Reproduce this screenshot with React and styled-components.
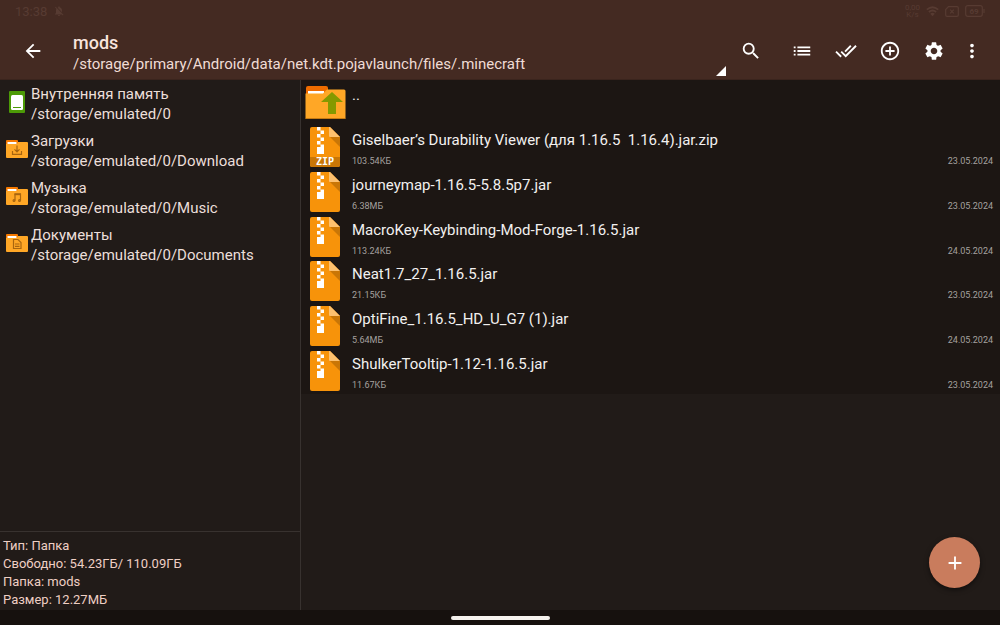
import React from "react";
import styled, { createGlobalStyle } from "styled-components";
import {
  MdArrowBack, MdSearch, MdList, MdDoneAll, MdAddCircleOutline, MdSettings, MdMoreVert, MdAdd,
  MdNotificationsOff,
} from "react-icons/md";

const GlobalStyle = createGlobalStyle`
  * { box-sizing: border-box; }
  body { margin: 0; background: #211b18; }
  button { font: inherit; color: inherit; background: none; border: 0; padding: 0; cursor: pointer; }
  ul, h1, p, dl, dd { margin: 0; padding: 0; list-style: none; }
  a { color: inherit; text-decoration: none; }
`;

const Screen = styled.div`
  min-height: 100vh;
  display: flex;
  flex-direction: column;
  font-family: Roboto, "Noto Sans", sans-serif;
  color: #f2f0ef;
`;

const Header = styled.header`
  background: #442a22;
  border-bottom: 1px solid #3a241d;
`;

const StatusBar = styled.div`
  display: flex;
  justify-content: space-between;
  align-items: center;
  height: 22px;
  padding: 0 15px;
  font-size: 13px;
  color: #573b32;
`;

const StatusGroup = styled.div`
  display: flex;
  align-items: center;
  gap: 6px;
`;

const NetSpeed = styled.span`
  font-size: 8px;
  line-height: 7px;
  text-align: center;
`;

const Toolbar = styled.div`
  display: flex;
  height: 57px;
  padding-right: 12px;
`;

const IconButton = styled.button`
  width: ${(p) => p.$width || 44}px;
  margin-right: ${(p) => p.$after || 0}px;
  display: flex;
  align-items: center;
  justify-content: center;
  color: #ffffff;
`;

const PathButton = styled.button`
  flex: 1;
  min-width: 0;
  display: flex;
  justify-content: space-between;
  align-items: flex-end;
  padding: 9px 3px 3px 7px;
  text-align: left;
`;

const PathText = styled.span`
  display: flex;
  flex-direction: column;
  align-self: flex-start;
`;

const FolderName = styled.span`
  font-size: 18px;
  line-height: 23px;
  font-weight: 500;
  color: #f8e4dd;
`;

const FolderPath = styled.span`
  font-size: 15px;
  line-height: 20px;
  color: #f0dcd5;
`;

const Body = styled.div`
  flex: 1;
  display: flex;
`;

const Sidebar = styled.aside`
  width: 30%;
  display: flex;
  flex-direction: column;
  justify-content: space-between;
  border-right: 1px solid #38322f;
  box-sizing: content-box;
`;

const Place = styled.a`
  display: flex;
  align-items: center;
  height: 47px;
  padding: 0 5px;
  gap: 2px;
  color: #ecdfda;
  font-size: 15px;
  line-height: 20px;
`;

const PlaceBadge = styled.span`
  display: flex;
  padding-bottom: 4px;
`;

const PlaceText = styled.span`
  display: flex;
  flex-direction: column;
`;

const Summary = styled.div`
  border-top: 1px solid #38322f;
  padding: 5px 3px 1px;
  font-size: 13px;
  line-height: 18px;
  color: #efcfc4;
`;

const Pane = styled.main`
  flex: 1;
  min-width: 0;
  position: relative;
`;

const FileList = styled.ul`
  display: grid;
  grid-auto-rows: 1fr;
  min-height: 314px;
  background: #1c1613;
`;

const FileRow = styled.li`
  display: flex;
`;

const FileLink = styled.a`
  flex: 1;
  min-width: 0;
  display: flex;
  gap: 6px;
  padding: 1px 7px 0 3px;
`;

const FileInfo = styled.span`
  flex: 1;
  min-width: 0;
  display: flex;
  flex-direction: column;
  padding-top: 4px;
`;

const FileName = styled.span`
  font-size: 15px;
  line-height: 20px;
  white-space: pre;
`;

const FileMeta = styled.span`
  display: flex;
  justify-content: space-between;
  margin-top: 5px;
  font-size: 9px;
  line-height: 12px;
  color: #a5a19f;
`;

const Fab = styled.button`
  position: absolute;
  right: 20px;
  bottom: 22px;
  width: 51px;
  height: 51px;
  border-radius: 50%;
  background: #c97c5d;
  color: #fff;
  display: flex;
  align-items: center;
  justify-content: center;
  box-shadow: 0 2px 5px rgba(0, 0, 0, 0.5);
`;

const NavBar = styled.footer`
  height: 15px;
  display: flex;
  justify-content: center;
  align-items: center;
  background: #16110e;
`;

const HomeHandle = styled.div`
  width: 99px;
  height: 4px;
  border-radius: 2px;
  background: #f1efea;
`;

const WifiIcon = () => (
  <svg width="13" height="11" viewBox="0 0 13 11" fill="none" stroke="currentColor" strokeWidth="1.800">
    <path d="M.8 3.600q5.700-4.600 11.400 0M2.900 6q3.600-3 7.200 0" />
    <path d="M4.300 7.700q2.200-1.700 4.400 0L6.500 10.300z" fill="currentColor" stroke="none" />
  </svg>
);

const NoSimIcon = () => (
  <svg width="14" height="11" viewBox="0 0 14 11" fill="none" stroke="currentColor" strokeWidth="1.200">
    <path d="M3.500.7H12a1.300 1.300 0 0 1 1.300 1.300v7A1.300 1.300 0 0 1 12 10.300H2A1.300 1.300 0 0 1 .7 9V3.500z" />
    <path d="M5.200 3.700l3.600 3.600M8.800 3.700L5.200 7.300" />
  </svg>
);

const BatteryIcon = () => (
  <svg width="20" height="12" viewBox="0 0 20 12" fill="none" stroke="currentColor" strokeWidth="1.200">
    <rect x=".7" y=".7" width="16.600" height="10.600" rx="2" />
    <path d="M19 4v4" />
    <text x="9" y="9" fontSize="8" fontWeight="700" textAnchor="middle" fill="currentColor" stroke="none">69</text>
  </svg>
);

const CornerIcon = () => (
  <svg width="10" height="10" viewBox="0 0 10 10"><path d="M10 0v10H0z" fill="#fff" /></svg>
);

const glyphs = {
  download: <path d="M12 8.500v6M9.500 12.300l2.500 2.500 2.500-2.500M7.500 14v3.300h9V14" />,
  music: (
    <>
      <path d="M10 16.500V10h5.500v6.500" />
      <path d="M9.500 10.300h6.500" strokeWidth="1.800" />
      <circle cx="9" cy="16.500" r=".9" /><circle cx="14.500" cy="16.500" r=".9" />
    </>
  ),
  document: <path d="M8.500 8.500h4.500l3 3V17.500h-7.500zM10 13h4.500M10 15.300h4.500" />,
};

const PlaceIcon = ({ kind }) =>
  kind === "memory" ? (
    <svg width="24" height="24" viewBox="0 0 24 24">
      <rect x="4" y="1" width="16" height="22" rx="1" fill="#4c9a06" />
      <rect x="6" y="5" width="12" height="15" rx="1.500" fill="#fff" />
      <path d="M8 17.500h8" stroke="#4c9a06" />
    </svg>
  ) : (
    <svg width="24" height="24" viewBox="0 0 24 24">
      <path d="M1 4q0-1 1-1h10q1 0 1 1v5H1z" fill="#f57900" />
      <path d="M2.500 5h9v2h-9z" fill="#fff" />
      <path d="M1 7h11l1-2h9q1 0 1 1v14q0 1-1 1H2q-1 0-1-1z" fill="#ffa726" />
      <g fill="none" stroke="#a8650f" strokeWidth="1.200">{glyphs[kind]}</g>
    </svg>
  );

const ParentIcon = () => (
  <svg width="42" height="42" viewBox="0 0 42 42">
    <path d="M2 7q0-2 2-2h18q2 0 2 2v6H2z" fill="#ef6c00" />
    <path d="M4 10h16v3H4z" fill="#fff" />
    <path d="M1.500 12.500h17.500l4-4h17q1.500 0 1.500 1.500v27.500H1.500z" fill="#ffa726" />
    <path d="M1.500 37h40v1h-40z" fill="#c77b12" />
    <path d="M28 11l11 10h-7v12h-8V21h-7z" fill="#859900" />
  </svg>
);

const ArchiveIcon = ({ zip }) => (
  <svg width="42" height="42" viewBox="0 0 42 42">
    <path d="M8 1h18l10 10v28q0 2-2 2H8q-2 0-2-2V3q0-2 2-2z" fill="#f7930a" />
    <path d="M26 11h10v10z" fill="#c97606" />
    <path d="M26 1l10 10H26q-1 0-1-1V1z" fill="#fdc06e" />
    <path
      d="M13 1h3.500v3.500H13zM16.500 4.500H20V8h-3.500zM13 8h3.500v3.500H13zM16.500 11.500H20V15h-3.500zM13 15h3.500v3.500H13zM16.500 18.500H20V21h-3.500zM13 21h7v7h-7z"
      fill="#fff"
    />
    {zip && (
      <>
        <path d="M6 31h30v8q0 2-2 2H8q-2 0-2-2z" fill="#c97606" />
        <text x="21" y="39" fontSize="10" fontWeight="700" fontFamily="DejaVu Sans Mono, monospace" textAnchor="middle" fill="#fff">ZIP</text>
      </>
    )}
  </svg>
);

const places = [
  { kind: "memory", name: "Внутренняя память", path: "/storage/emulated/0" },
  { kind: "download", name: "Загрузки", path: "/storage/emulated/0/Download" },
  { kind: "music", name: "Музыка", path: "/storage/emulated/0/Music" },
  { kind: "document", name: "Документы", path: "/storage/emulated/0/Documents" },
];

const files = [
  { name: "Giselbaer’s Durability Viewer (для 1.16.5  1.16.4).jar.zip", size: "103.54КБ", date: "23.05.2024", zip: true },
  { name: "journeymap-1.16.5-5.8.5p7.jar", size: "6.38МБ", date: "23.05.2024" },
  { name: "MacroKey-Keybinding-Mod-Forge-1.16.5.jar", size: "113.24КБ", date: "24.05.2024" },
  { name: "Neat1.7_27_1.16.5.jar", size: "21.15КБ", date: "23.05.2024" },
  { name: "OptiFine_1.16.5_HD_U_G7 (1).jar", size: "5.64МБ", date: "24.05.2024" },
  { name: "ShulkerTooltip-1.12-1.16.5.jar", size: "11.67КБ", date: "23.05.2024" },
];

const summary = ["Тип: Папка", "Свободно: 54.23ГБ/ 110.09ГБ", "Папка: mods", "Размер: 12.27МБ"];

export default function App() {
  return (
    <Screen>
      <GlobalStyle />
      <Header>
        <StatusBar>
          <StatusGroup>
            <span>13:38</span>
            <MdNotificationsOff size={12} />
          </StatusGroup>
          <StatusGroup>
            <NetSpeed>0,00<br />K/s</NetSpeed>
            <WifiIcon />
            <NoSimIcon />
            <BatteryIcon />
          </StatusGroup>
        </StatusBar>
        <Toolbar>
          <IconButton $width={66} aria-label="Назад"><MdArrowBack size={22} /></IconButton>
          <PathButton>
            <PathText>
              <FolderName>mods</FolderName>
              <FolderPath>/storage/primary/Android/data/net.kdt.pojavlaunch/files/.minecraft</FolderPath>
            </PathText>
            <CornerIcon />
          </PathButton>
          <IconButton $after={7} aria-label="Поиск"><MdSearch size={22} /></IconButton>
          <IconButton aria-label="Вид"><MdList size={22} /></IconButton>
          <IconButton aria-label="Выделить все"><MdDoneAll size={22} /></IconButton>
          <IconButton aria-label="Добавить"><MdAddCircleOutline size={22} /></IconButton>
          <IconButton aria-label="Настройки"><MdSettings size={22} /></IconButton>
          <IconButton $width={32} aria-label="Меню"><MdMoreVert size={22} /></IconButton>
        </Toolbar>
      </Header>
      <Body>
        <Sidebar>
          <nav>
            <ul>
              {places.map((p) => (
                <li key={p.path}>
                  <Place href="#">
                    <PlaceBadge><PlaceIcon kind={p.kind} /></PlaceBadge>
                    <PlaceText>
                      <span>{p.name}</span>
                      <span>{p.path}</span>
                    </PlaceText>
                  </Place>
                </li>
              ))}
            </ul>
          </nav>
          <Summary>
            {summary.map((line) => <p key={line}>{line}</p>)}
          </Summary>
        </Sidebar>
        <Pane>
          <FileList>
            <FileRow>
              <FileLink href="#">
                <ParentIcon />
                <FileInfo><FileName>..</FileName></FileInfo>
              </FileLink>
            </FileRow>
            {files.map((f) => (
              <FileRow key={f.name}>
                <FileLink href="#">
                  <ArchiveIcon zip={f.zip} />
                  <FileInfo>
                    <FileName>{f.name}</FileName>
                    <FileMeta><span>{f.size}</span><time>{f.date}</time></FileMeta>
                  </FileInfo>
                </FileLink>
              </FileRow>
            ))}
          </FileList>
          <Fab aria-label="Создать"><MdAdd size={22} /></Fab>
        </Pane>
      </Body>
      <NavBar><HomeHandle /></NavBar>
    </Screen>
  );
}
